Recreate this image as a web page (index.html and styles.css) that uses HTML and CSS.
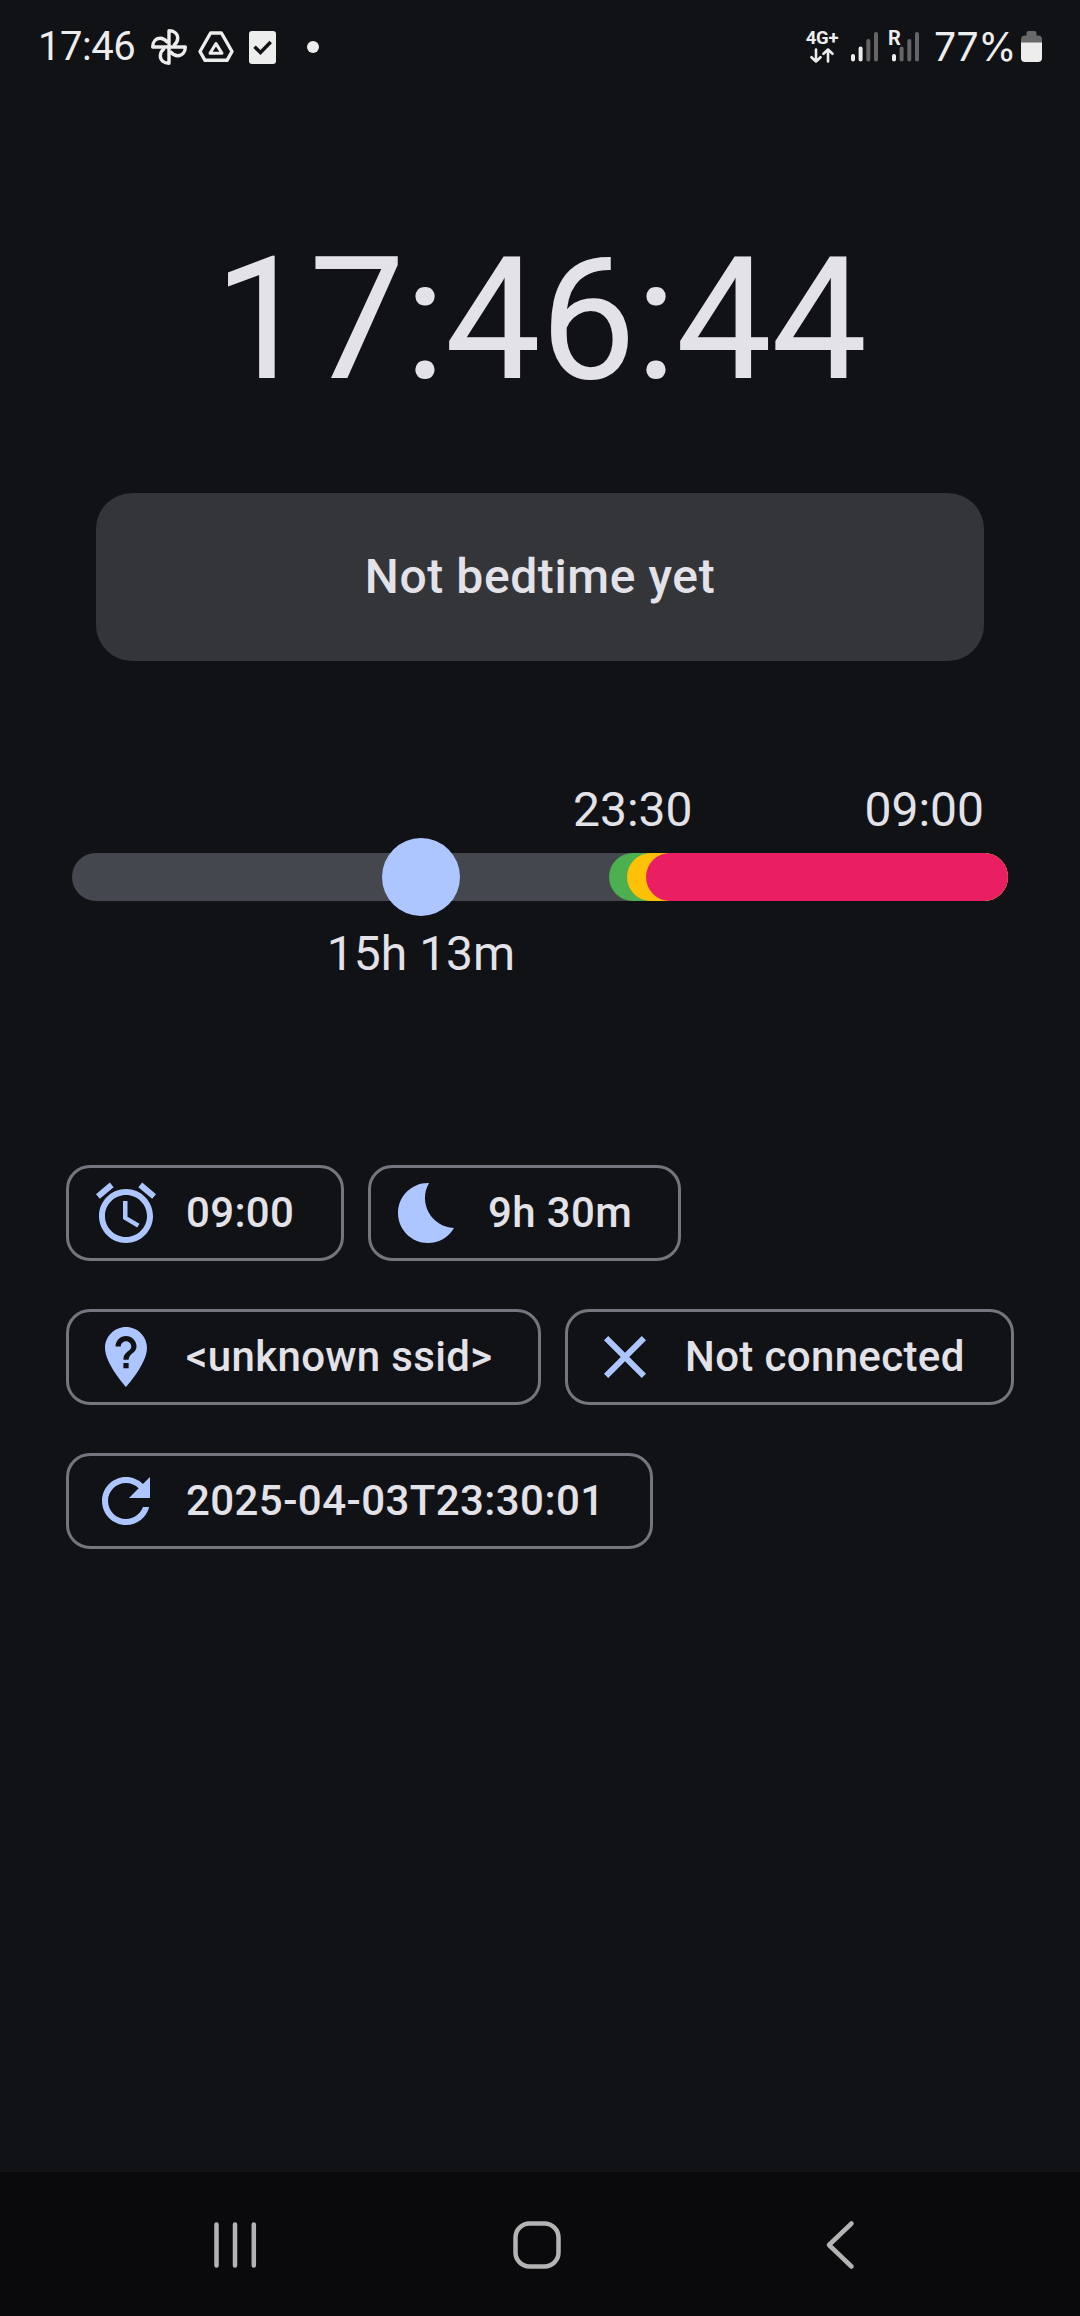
FILE: index.html
```html
<!DOCTYPE html>
<html lang="en">
<head>
<meta charset="utf-8">
<title>Bedtime clock</title>
<link rel="stylesheet" href="styles.css">
</head>
<body>
<header class="status-bar">
  <div class="status-left">
    <span class="status-time">17:46</span>
    <svg class="ico-pinwheel" width="38" height="38" viewBox="0 0 38 38" fill="none" stroke="currentColor" stroke-width="3.4" stroke-linejoin="round">
      <path d="M19 19V2.700c5 0 8.700 3 8.700 7.500 0 3.300-1.700 5.500-4.200 7.800"/>
      <path d="M19 19h16.300c0 5-3 8.700-7.500 8.700-3.300 0-5.500-1.700-7.800-4.200"/>
      <path d="M19 19v16.300c-5 0-8.700-3-8.700-7.500 0-3.300 1.700-5.500 4.200-7.800"/>
      <path d="M19 19H2.700c0-5 3-8.700 7.500-8.700 3.300 0 5.500 1.700 7.800 4.200"/>
    </svg>
    <svg class="ico-drive" width="36" height="32" viewBox="0 0 36 32" fill="none" stroke="currentColor" stroke-linejoin="round">
      <path stroke-width="3.400" d="M12.600 2h10.800L34 20.500 29 29.300H7L2 20.500z"/>
      <path stroke-width="3" d="M18 12.600l6 9.700H12z"/>
    </svg>
    <svg class="ico-check" width="27" height="33" viewBox="0 0 27 33">
      <rect width="27" height="33" rx="3" fill="currentColor"/>
      <path d="M5.500 15.700l6 5.800 10.200-10.400" fill="none" stroke="#111216" stroke-width="3.500"/>
    </svg>
    <span class="dot"></span>
  </div>
  <div class="status-right">
    <div class="network">
      <span class="network-label">4G+</span>
      <svg width="24" height="15" viewBox="0 0 24 15" fill="none" stroke="currentColor" stroke-width="2.600" stroke-linecap="round" stroke-linejoin="round">
        <path d="M6 1.500v12M1.500 9.200L6 13.500l4.500-4.300M18 13.500v-12M13.500 5.800L18 1.500l4.500 4.300"/>
      </svg>
    </div>
    <svg class="signal" width="27" height="30" viewBox="0 0 27 30" fill="currentColor">
      <rect x="0" y="22" width="4" height="7.500" rx="2"/>
      <rect x="7.600" y="14.500" width="4" height="15" rx="2"/>
      <g class="dim"><rect x="15.300" y="7" width="4" height="22.500" rx="2"/><rect x="23" y="0" width="4" height="29.500" rx="2"/></g>
    </svg>
    <div class="roaming">
      <svg width="31" height="30" viewBox="0 0 31 30" fill="currentColor">
        <rect x="3" y="22" width="4" height="7.500" rx="2"/>
        <g class="dim"><rect x="10.600" y="14.500" width="4" height="15" rx="2"/><rect x="18.300" y="7" width="4" height="22.500" rx="2"/><rect x="26" y="0" width="4" height="29.500" rx="2"/></g>
      </svg>
      <span class="roaming-label">R</span>
    </div>
    <span class="battery-text">77%</span>
    <svg class="battery" width="21" height="32" viewBox="0 0 21 32">
      <path d="M5.500 4.500V2q0-2 2-2h6q2 0 2 2v2.500h1.500q4 0 4 4V12H0V8.500q0-4 4-4z" fill="#68696b"/>
      <path d="M0 11.500h21V27q0 4-4 4H4q-4 0-4-4z" fill="currentColor"/>
    </svg>
  </div>
</header>

<main class="screen">
  <h1 class="clock">17:46:44</h1>
  <section class="card">Not bedtime yet</section>

  <section class="timeline">
    <div class="timeline-labels"><span>23:30</span><span>09:00</span></div>
    <div class="track">
      <span class="segment green"></span>
      <span class="segment yellow"></span>
      <span class="segment red"></span>
      <span class="thumb"></span>
    </div>
    <div class="remaining">15h 13m</div>
  </section>

  <section class="chips">
    <div class="chip-row">
      <div class="chip w-alarm">
        <svg class="icon" viewBox="0 0 24 24"><path d="M22 5.720l-4.600-3.860-1.290 1.530 4.600 3.860L22 5.720zM7.880 3.390L6.600 1.860 2 5.710l1.290 1.530 4.590-3.850zM12.500 8H11v6l4.750 2.850.75-1.230-4-2.370V8zM12 4c-4.970 0-9 4.030-9 9s4.020 9 9 9c4.970 0 9-4.030 9-9s-4.030-9-9-9zm0 16c-3.870 0-7-3.130-7-7s3.130-7 7-7 7 3.130 7 7-3.130 7-7 7z"/></svg>
        <span>09:00</span>
      </div>
      <div class="chip w-sleep">
        <svg class="icon" viewBox="0 0 24 24"><path d="M12.340 2.020C6.590 1.820 2 6.420 2 12c0 5.520 4.480 10 10 10 3.710 0 6.930-2.020 8.660-5.020-7.510-.25-12.090-8.430-8.320-14.960z"/></svg>
        <span>9h 30m</span>
      </div>
    </div>
    <div class="chip-row">
      <div class="chip w-ssid">
        <svg class="icon" viewBox="0 0 24 24"><path d="M12 2C8.140 2 5 5.140 5 9c0 5.250 7 13 7 13s7-7.750 7-13c0-3.860-3.140-7-7-7zm.88 13.750h-1.750V14h1.750v1.750zm0-2.870h-1.750c0-2.840 2.620-2.620 2.620-4.380 0-.96-.79-1.750-1.750-1.750s-1.750.79-1.750 1.750H8.500C8.500 6.570 10.070 5 12 5s3.500 1.570 3.500 3.500c0 2.190-2.620 2.410-2.620 4.380z"/></svg>
        <span>&lt;unknown ssid&gt;</span>
      </div>
      <div class="chip w-conn">
        <svg class="icon" viewBox="0 0 24 24"><path d="M19 6.410L17.590 5 12 10.590 6.410 5 5 6.410 10.590 12 5 17.590 6.410 19 12 13.410 17.590 19 19 17.590 13.410 12z"/></svg>
        <span>Not connected</span>
      </div>
    </div>
    <div class="chip-row">
      <div class="chip w-date">
        <svg class="icon" viewBox="0 0 24 24"><path d="M17.650 6.350C16.200 4.900 14.210 4 12 4c-4.420 0-7.990 3.580-7.990 8s3.570 8 7.990 8c3.730 0 6.840-2.550 7.730-6h-2.080c-.82 2.330-3.040 4-5.650 4-3.310 0-6-2.690-6-6s2.690-6 6-6c1.660 0 3.140.69 4.220 1.780L13 11h7V4l-2.350 2.350z"/></svg>
        <span>2025-04-03T23:30:01</span>
      </div>
    </div>
  </section>
</main>

<nav class="nav-bar">
  <svg width="44" height="50" viewBox="0 0 44 50"><path d="M3.500 4.500v41M22 4.500v41M40.800 4.500v41"/></svg>
  <svg class="home" width="50" height="50" viewBox="0 0 50 50"><rect x="3.500" y="3.500" width="43" height="43" rx="14"/></svg>
  <svg width="30" height="50" viewBox="0 0 30 50"><path d="M26.500 3.500L4 25l22.500 21.500"/></svg>
</nav>
</body>
</html>
```
FILE: styles.css
```css
* { box-sizing: border-box; }

body {
  margin: 0;
  width: 1080px;
  height: 2316px;
  display: flex;
  flex-direction: column;
  background: #111216;
  color: #e3e2e8;
  font-family: Roboto, sans-serif;
  overflow: hidden;
}

svg { display: block; flex: none; }

/* Status bar */
.status-bar {
  height: 94px;
  flex: none;
  display: flex;
  justify-content: space-between;
  padding: 0 38px 0 38px;
  color: #ededed;
}
.status-left, .status-right { display: flex; align-items: center; }
.status-time { font-size: 40px; line-height: 48px; width: 112px; letter-spacing: -0.5px; }
.ico-drive { margin-left: 10px; }
.ico-check { margin-left: 15px; }
.dot { width: 12px; height: 12px; border-radius: 50%; background: currentColor; margin-left: 31px; }
.network { width: 34px; display: flex; flex-direction: column; align-items: center; gap: 2px; }
.network-label { font-size: 18.5px; line-height: 15px; font-weight: 700; letter-spacing: -0.3px; }
.signal { margin-left: 12px; }
.dim { opacity: 0.38; }
.roaming { position: relative; margin-left: 11px; }
.roaming-label {
  position: absolute;
  left: -1px;
  top: -2px;
  font-size: 20px;
  line-height: 17px;
  font-weight: 700;
  background: #111216;
}
.battery-text {
  width: 87px;
  margin-left: 14px;
  font-family: Inter, Roboto, sans-serif;
  font-size: 39px;
  line-height: 48px;
  letter-spacing: -0.3px;
}

/* Main screen */
.screen { flex: 1; display: flex; flex-direction: column; padding: 130px 66px 0; }
.clock {
  margin: 0;
  font-size: 171px;
  line-height: 192px;
  font-weight: 400;
  letter-spacing: -0.9px;
  text-align: center;
}
.card {
  height: 168px;
  margin: 77px 30px 0;
  border-radius: 36px;
  background: #343539;
  display: flex;
  align-items: center;
  justify-content: center;
  font-size: 48px;
  line-height: 72px;
  font-weight: 500;
  letter-spacing: 0.6px;
}

/* Timeline */
.timeline { margin: 113px 6px 0; font-size: 48px; line-height: 72px; }
.timeline-labels { display: flex; justify-content: flex-end; gap: 172px; padding-right: 24px; }
.track { position: relative; height: 48px; margin-top: 7px; border-radius: 24px; background: #45474f; }
.segment { position: absolute; top: 0; bottom: 0; right: 0; border-radius: 24px; }
.green { left: 536.500px; background: #4caf50; }
.yellow { left: 555px; background: #ffc107; }
.red { left: 573.500px; background: #e91e63; }
.thumb {
  position: absolute;
  left: 310px;
  top: -15px;
  width: 78px;
  height: 78px;
  border-radius: 50%;
  background: #adc6ff;
}
.remaining { width: 698px; margin-top: 17px; text-align: center; }

/* Chips */
.chips { display: flex; flex-direction: column; gap: 48px; margin-top: 175px; }
.chip-row { display: flex; gap: 24px; }
.chip {
  height: 96px;
  border: 3px solid #74757d;
  border-radius: 24px;
  display: flex;
  align-items: center;
  gap: 24px;
  padding-left: 21px;
  font-size: 42px;
  line-height: 60px;
  font-weight: 500;
  letter-spacing: 0.35px;
  white-space: nowrap;
}
.icon { width: 72px; height: 72px; fill: #adc6ff; }
.w-alarm { width: 278px; }
.w-sleep { width: 313px; }
.w-ssid { width: 475px; }
.w-conn { width: 449px; }
.w-date { width: 587px; letter-spacing: 0.42px; }

/* Navigation bar */
.nav-bar {
  height: 144px;
  flex: none;
  display: flex;
  justify-content: space-between;
  padding: 48px 225px 0 213px;
  background: #0a0a0c;
}
.nav-bar svg { fill: none; stroke: #b4b4b4; stroke-width: 4.500; stroke-linecap: round; stroke-linejoin: round; }
.nav-bar .home { margin-right: 8px; }
```
